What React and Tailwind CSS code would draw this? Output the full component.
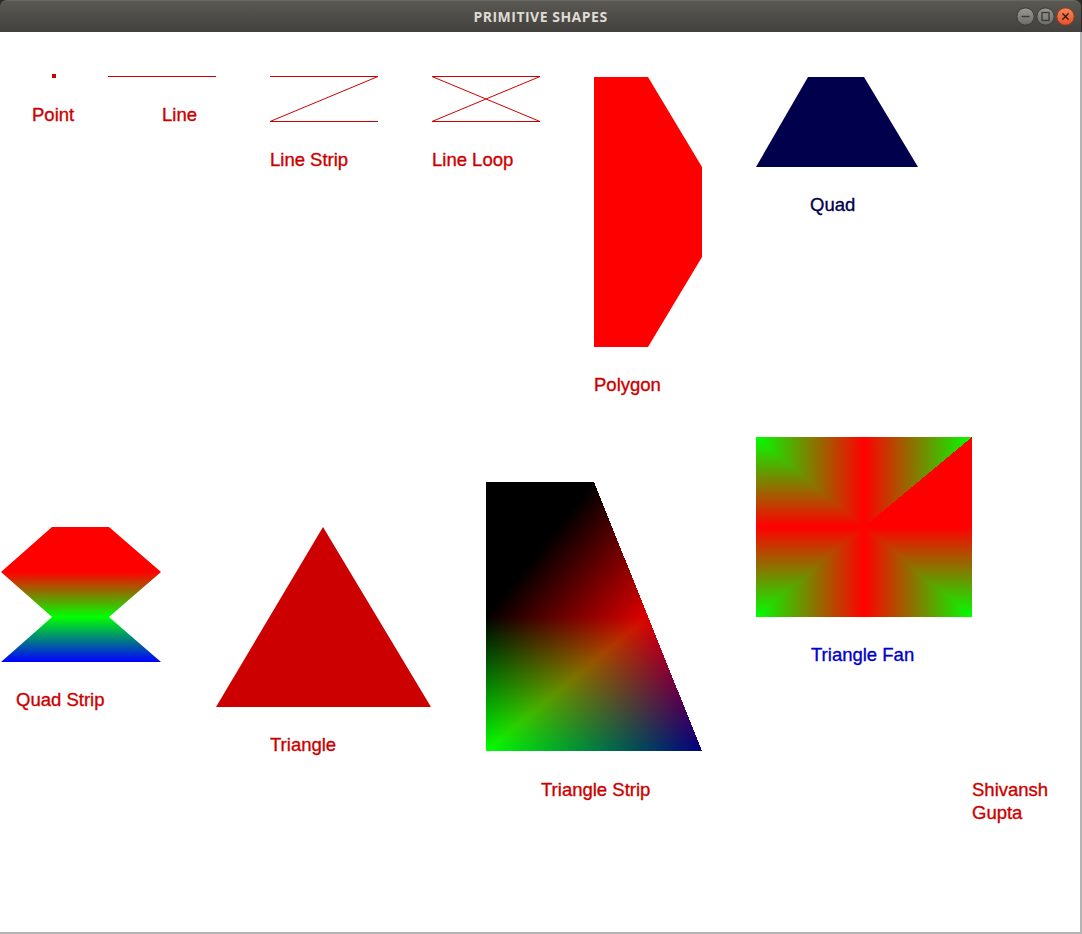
import React from "react";

const RED = "#ff0000";
const GREEN = "#00ff00";
const BLUE = "#0000ff";
const BLACK = "#000000";

function foot(p, a, b) {
  const dx = b[0] - a[0];
  const dy = b[1] - a[1];
  const t = ((p[0] - a[0]) * dx + (p[1] - a[1]) * dy) / (dx * dx + dy * dy);
  return [a[0] + t * dx, a[1] + t * dy];
}

const pts = (arr) => arr.map((p) => p.join(",")).join(" ");

// Triangle where one vertex v has colour cv and the other two share colour co
function Tri2({ id, v, a, b, cv, co }) {
  const f = foot(v, a, b);
  return (
    <g>
      <defs>
        <linearGradient id={id} gradientUnits="userSpaceOnUse" x1={v[0]} y1={v[1]} x2={f[0]} y2={f[1]}>
          <stop offset="0" stopColor={cv} />
          <stop offset="1" stopColor={co} />
        </linearGradient>
      </defs>
      <polygon points={pts([v, a, b])} fill={`url(#${id})`} shapeRendering="crispEdges" />
    </g>
  );
}

// Triangle with vertex colours on disjoint channels (additive via screen on black)
function Tri3({ id, p, c }) {
  return (
    <g style={{ isolation: "isolate" }}>
      <defs>
        {p.map((v, i) => {
          const a = p[(i + 1) % 3];
          const b = p[(i + 2) % 3];
          const f = foot(v, a, b);
          return (
            <linearGradient key={i} id={`${id}-${i}`} gradientUnits="userSpaceOnUse" x1={v[0]} y1={v[1]} x2={f[0]} y2={f[1]}>
              <stop offset="0" stopColor={c[i]} />
              <stop offset="1" stopColor={BLACK} />
            </linearGradient>
          );
        })}
      </defs>
      <polygon points={pts(p)} fill={BLACK} shapeRendering="crispEdges" />
      {p.map((v, i) =>
        c[i] === BLACK ? null : (
          <polygon
            key={i}
            points={pts(p)}
            fill={`url(#${id}-${i})`}
            shapeRendering="crispEdges"
            style={{ mixBlendMode: "screen" }}
          />
        )
      )}
    </g>
  );
}

function Label({ children, left, top, className = "text-[#cc0000]" }) {
  return (
    <span
      className={`absolute text-[18.5px] leading-[18px] whitespace-nowrap [-webkit-text-stroke:0.35px_currentColor] ${className}`}
      style={{ left, top, fontFamily: '"Liberation Sans", Arial, sans-serif' }}
    >
      {children}
    </span>
  );
}

function Canvas() {
  const C = [864, 527];
  const TM = [864, 437];
  const TL = [756, 437];
  const LM = [756, 527];
  const BL = [756, 617];
  const BM = [864, 617];
  const BR = [972, 617];
  const RM = [972, 527];
  const TR = [972, 437];

  const sTL = [486, 482];
  const sTR = [594, 482];
  const sLM = [486, 616.5];
  const sM = [648, 616.5];
  const sBL = [486, 751];
  const sBR = [702, 751];
  const sRed = "#e00000";
  const sBlue = "#000080";

  return (
    <svg width="1080" height="900" viewBox="0 32 1080 900" className="block">
      <defs>
        <linearGradient id="qs" gradientUnits="userSpaceOnUse" x1="0" y1="527" x2="0" y2="662">
          <stop offset="0" stopColor={RED} />
          <stop offset="0.3333" stopColor={RED} />
          <stop offset="0.6667" stopColor={GREEN} />
          <stop offset="1" stopColor={BLUE} />
        </linearGradient>
      </defs>

      {/* Point */}
      <rect x="52" y="74" width="4" height="4" fill="#cc0000" />

      {/* Lines */}
      <g stroke="#cc0000" strokeWidth="1" fill="none">
        <line x1="108" y1="76.5" x2="216" y2="76.5" />
        <polyline points="270,76.5 378,76.5 270,121.5 378,121.5" />
        <polygon points="432,76.5 540,76.5 432,121.5 540,121.5" />
      </g>

      {/* Polygon */}
      <polygon points="594,77 648,77 702,167 702,257 648,347 594,347" fill={RED} />

      {/* Quad */}
      <polygon points="808,77 864,77 918,167 756,167" fill="#00004d" />

      {/* Quad strip */}
      <polygon points="52,527 109,527 161,572 109,617 161,662 1,662 52,617 1,572" fill="url(#qs)" />

      {/* Triangle */}
      <polygon points="323,527 216,707 431,707" fill="#cc0000" />

      {/* Triangle strip: TL, TR, LM, M, BL, BR */}
      <polygon points={pts([sTL, sTR, sLM])} fill={BLACK} shapeRendering="crispEdges" />
      <Tri2 id="ts2" v={sM} a={sTR} b={sLM} cv={sRed} co={BLACK} />
      <Tri3 id="ts3" p={[sLM, sM, sBL]} c={[BLACK, sRed, GREEN]} />
      <Tri3 id="ts4" p={[sM, sBL, sBR]} c={[sRed, GREEN, sBlue]} />

      {/* Triangle fan */}
      <Tri2 id="f1" v={TL} a={C} b={TM} cv={GREEN} co={RED} />
      <Tri2 id="f2" v={TL} a={C} b={LM} cv={GREEN} co={RED} />
      <Tri2 id="f3" v={BL} a={C} b={LM} cv={GREEN} co={RED} />
      <Tri2 id="f4" v={BL} a={C} b={BM} cv={GREEN} co={RED} />
      <Tri2 id="f5" v={BR} a={C} b={BM} cv={GREEN} co={RED} />
      <Tri2 id="f6" v={BR} a={C} b={RM} cv={GREEN} co={RED} />
      <polygon points={pts([C, RM, TR])} fill={RED} shapeRendering="crispEdges" />
      <Tri2 id="f8" v={TR} a={C} b={TM} cv={GREEN} co={RED} />
    </svg>
  );
}

function WinButton({ kind }) {
  const close = kind === "close";
  return (
    <svg width="19" height="19" viewBox="0 0 19 19">
      <defs>
        <linearGradient id={`wb-${kind}`} x1="0" y1="0" x2="0" y2="1">
          <stop offset="0" stopColor={close ? "#f7885a" : "#9a9994"} />
          <stop offset="1" stopColor={close ? "#e5512a" : "#6c6b67"} />
        </linearGradient>
      </defs>
      <circle cx="9.5" cy="9.5" r="8.6" fill={`url(#wb-${kind})`} stroke={close ? "#a8391a" : "#3a3935"} strokeWidth="0.9" />
      {kind === "min" && <line x1="5.5" y1="9.5" x2="13.5" y2="9.5" stroke="#3b3a36" strokeWidth="1.4" />}
      {kind === "max" && <rect x="6" y="5.5" width="7" height="8" fill="none" stroke="#3b3a36" strokeWidth="1.3" />}
      {close && (
        <g stroke="#3c1a10" strokeWidth="1.4" strokeLinecap="round">
          <line x1="6.8" y1="6.8" x2="12.2" y2="12.2" />
          <line x1="12.2" y1="6.8" x2="6.8" y2="12.2" />
        </g>
      )}
    </svg>
  );
}

export default function App() {
  return (
    <div className="w-[1082px] h-[934px] bg-[#2c2c2a] overflow-hidden">
      <div className="w-[1082px] flex flex-col">
        <div className="h-[32px] w-[1081px] rounded-t-[7px] bg-gradient-to-b from-[#5a5853] to-[#42413d] border-t border-[#6a6863] flex items-center relative">
          <div
            className="flex-1 text-center text-[14px] font-bold text-[#dfdbd2] tracking-[0.5px]"
            style={{ fontFamily: '"Open Sans", "DejaVu Sans", sans-serif' }}
          >
            PRIMITIVE SHAPES
          </div>
          <div className="absolute right-[6px] top-[6px] flex gap-[1px]">
            <WinButton kind="min" />
            <WinButton kind="max" />
            <WinButton kind="close" />
          </div>
        </div>
        <div className="w-[1082px] h-[902px] bg-white border-r-2 border-b-2 border-[#b4b4b4] relative">
          <Canvas />
          <Label left={32} top={74}>Point</Label>
          <Label left={162} top={74}>Line</Label>
          <Label left={270} top={119}>Line Strip</Label>
          <Label left={432} top={119}>Line Loop</Label>
          <Label left={594} top={344}>Polygon</Label>
          <Label left={810} top={164} className="text-[#00004d]">Quad</Label>
          <Label left={16} top={659}>Quad Strip</Label>
          <Label left={270} top={704}>Triangle</Label>
          <Label left={541} top={749}>Triangle Strip</Label>
          <Label left={811} top={614} className="text-[#0000cc]">Triangle Fan</Label>
          <Label left={972} top={749}>Shivansh</Label>
          <Label left={972} top={772}>Gupta</Label>
        </div>
      </div>
    </div>
  );
}
